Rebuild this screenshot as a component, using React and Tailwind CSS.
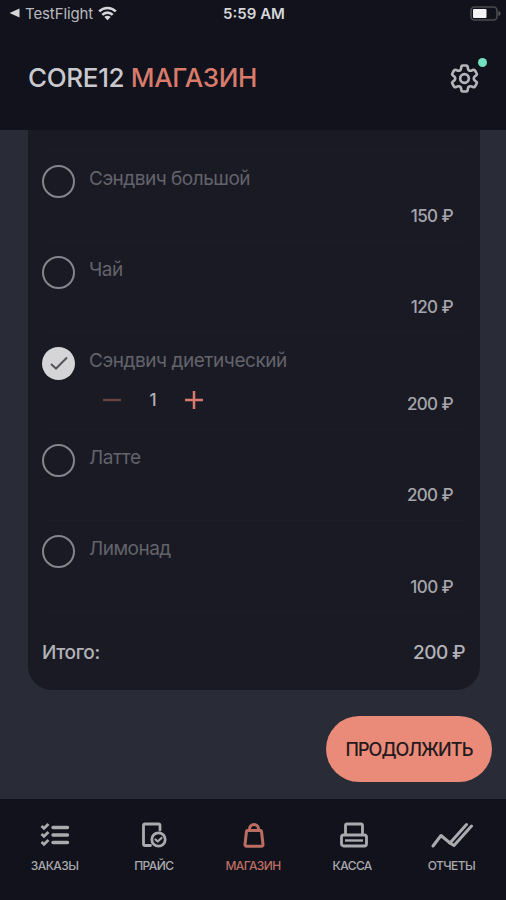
import React, { useState } from "react";

const initialItems = [
  { id: 1, name: "Сэндвич большой", price: 150, count: 0, tracking: "tracking-[-0.5px]" },
  { id: 2, name: "Чай", price: 120, count: 0, tracking: "tracking-[-0.5px]" },
  { id: 3, name: "Сэндвич диетический", price: 200, count: 1, tracking: "tracking-[-0.45px]" },
  { id: 4, name: "Латте", price: 200, count: 0, tracking: "tracking-[-0.4px]" },
  { id: 5, name: "Лимонад", price: 100, count: 0, tracking: "tracking-[-0.5px]" },
];

function StatusBar() {
  return (
    <div className="grid grid-cols-3 items-center h-7 pl-[9px] pr-[5px] text-[#d6d6da]">
      <div className="flex items-center pb-[2px]">
        <svg width="11" height="10" viewBox="0 0 11 10" fill="currentColor">
          <path d="M0.5 5 10.5 0.5v9z" />
        </svg>
        <span className="ml-[5px] text-[15px] leading-none tracking-[-0.1px] text-[#b9b9be]">TestFlight</span>
        <svg className="ml-[5px]" width="19" height="15" viewBox="0 0 19 15" fill="none" stroke="currentColor" strokeWidth="2.6">
          <path d="M1.2 5.4a11.8 11.8 0 0 1 16.6 0" />
          <path d="M4.3 8.8a7.4 7.4 0 0 1 10.4 0" />
          <path d="M9.5 14.3 6.3 11a4.6 4.6 0 0 1 6.4 0z" fill="currentColor" stroke="none" />
        </svg>
      </div>
      <div className="pb-[2px] pr-[2px] text-center text-[15px] leading-none font-semibold tracking-[0px]">5:59 AM</div>
      <svg className="justify-self-end mb-[2px]" width="31" height="15" viewBox="0 0 31 15">
        <rect x="1" y="1" width="26" height="13" rx="3.5" fill="none" stroke="#4b4b52" strokeWidth="1.6" />
        <rect x="3" y="3" width="13.5" height="9" rx="1" fill="#f4f4f5" />
        <path d="M28.5 5v5c1.3-.5 2-1.3 2-2.5s-.7-2-2-2.5z" fill="#5a5a61" />
      </svg>
    </div>
  );
}

function GearIcon() {
  return (
    <svg width="37" height="37" viewBox="0 0 24 24" fill="none" stroke="currentColor" strokeWidth="1.7" strokeLinejoin="round">
      <path d="M10.8 3h2.4a.8.8 0 0 1 .8.7l.3 1.5a1.500 1.500 0 0 0 2 1.100l1.500-.5a.8.8 0 0 1 1 .4l1.100 1.900a.8.8 0 0 1-.2 1.100l-1.200 1.100a1.500 1.500 0 0 0 0 2.200l1.200 1.100a.8.8 0 0 1 .2 1.100l-1.100 1.900a.8.8 0 0 1-1 .4l-1.500-.5a1.500 1.500 0 0 0-2 1.100l-.3 1.500a.8.8 0 0 1-.8.7h-2.400a.8.8 0 0 1-.8-.7l-.3-1.500a1.500 1.500 0 0 0-2-1.100l-1.500.5a.8.8 0 0 1-1-.4l-1.100-1.900a.8.8 0 0 1 .2-1.100l1.200-1.100a1.500 1.500 0 0 0 0-2.200L4.300 9.200a.8.8 0 0 1-.2-1.100l1.100-1.900a.8.8 0 0 1 1-.4l1.500.5a1.500 1.500 0 0 0 2-1.100l.3-1.500a.8.8 0 0 1 .8-.7z" transform="translate(0 .6)" />
      <circle cx="12" cy="12" r="2.8" />
    </svg>
  );
}

function Header() {
  return (
    <header className="h-[130px] shrink-0 bg-[#11121b]">
      <StatusBar />
      <div className="flex items-center justify-between h-[100px] pl-7 pr-[23px]">
        <h1 className="text-[26px] leading-none font-medium tracking-[-0.35px] text-[#c9c9cd] whitespace-nowrap">
          CORE12 <span className="text-[#d97b6b]">МАГАЗИН</span>
        </h1>
        <button className="relative text-[#b5b5ba]">
          <GearIcon />
          <span className="absolute -top-[2px] -right-[4px] w-[9px] h-[9px] rounded-full bg-[#72dfbf]"></span>
        </button>
      </div>
    </header>
  );
}

function ItemRow({ item, onToggle, onChange }) {
  const selected = item.count > 0;

  return (
    <li className={`flex pr-[12px] ${selected ? "h-[97px]" : "h-[91px]"}`}>
      <button onClick={() => onToggle(item.id)} className="mt-[14px] -ml-[5px] w-[33px] h-[33px] shrink-0">
        {selected ? (
          <svg width="33" height="33" viewBox="0 0 33 33">
            <circle cx="16.5" cy="16.5" r="16.5" fill="#d5d5d8" />
            <path d="M9 17l5 4.5 11-11" fill="none" stroke="#55555c" strokeWidth="2" />
          </svg>
        ) : (
          <div className="w-[33px] h-[33px] rounded-full border-2 border-[#85858e]"></div>
        )}
      </button>
      <div className="flex flex-col grow ml-[14px]">
        <span className={`mt-[18px] text-[19px] leading-5 text-[#63636b] whitespace-nowrap ${item.tracking}`}>{item.name}</span>
        {selected && (
          <div className="flex items-center mt-5 ml-[14px] h-[18px]">
            <button onClick={() => onChange(item.id, -1)}>
              <svg width="18" height="18" viewBox="0 0 18 18" stroke="#67433f" strokeWidth="2.5">
                <path d="M0 9h18" />
              </svg>
            </button>
            <span className="w-[64px] text-center text-[17px] leading-none font-medium text-[#b2b2b7]">{item.count}</span>
            <button onClick={() => onChange(item.id, 1)}>
              <svg width="18" height="18" viewBox="0 0 18 18" stroke="#d97b6b" strokeWidth="2.5">
                <path d="M0 9h18M9 0v18" />
              </svg>
            </button>
          </div>
        )}
      </div>
      <span className="self-end mb-[15px] text-[17px] leading-5 font-medium tracking-[-0.6px] text-[#a5a5ab] whitespace-nowrap">
        {item.price} ₽
      </span>
    </li>
  );
}

const tabs = [
  {
    label: "ЗАКАЗЫ",
    icon: (
      <svg width="30" height="26" viewBox="0 0 30 26" fill="none" stroke="currentColor">
        <path strokeWidth="2.8" d="M1.5 4l2.5 2.3L8.5 2M1.5 12l2.5 2.3L8.5 10M1.5 20l2.5 2.3L8.5 18" />
        <path strokeWidth="3.4" strokeLinecap="round" d="M13 5.5h14.5M13 13h14.5M13 20.5h14.5" />
      </svg>
    ),
  },
  {
    label: "ПРАЙС",
    icon: (
      <svg width="26" height="26" viewBox="0 0 26 26" fill="none" stroke="currentColor" strokeWidth="2.8" strokeLinecap="round" strokeLinejoin="round">
        <path d="M9.5 23.5H4a1.5 1.5 0 0 1-1.5-1.5V3.5A1.5 1.5 0 0 1 4 2h13.5A1.5 1.5 0 0 1 19 3.5V8" />
        <circle cx="17.5" cy="17.5" r="6.7" />
        <path strokeWidth="2.3" d="M14.5 17.5l2.2 2 3.8-3.5" />
      </svg>
    ),
  },
  {
    label: "МАГАЗИН",
    icon: (
      <svg className="translate-x-[1px]" width="24" height="26" viewBox="0 0 24 26" fill="none" stroke="currentColor" strokeWidth="3" strokeLinejoin="round">
        <path d="M5.5 8.5h13a1 1 0 0 1 1 .9l1.5 13.1a1.5 1.5 0 0 1-1.5 1.7h-15A1.5 1.5 0 0 1 3 22.5L4.5 9.4a1 1 0 0 1 1-.9z" />
        <path d="M7.5 8V7a4.5 4.5 0 0 1 9 0v1" />
      </svg>
    ),
  },
  {
    label: "КАССА",
    icon: (
      <svg className="translate-x-[2px]" width="28" height="26" viewBox="0 0 28 26" fill="none" stroke="currentColor" strokeWidth="2.8" strokeLinejoin="round">
        <path d="M5.5 12.5V3.5A1.5 1.5 0 0 1 7 2h14a1.5 1.5 0 0 1 1.5 1.5v9" />
        <rect x="1.5" y="13" width="25" height="11" rx="2.2" />
        <path strokeWidth="2.4" d="M5 18.5h18" />
      </svg>
    ),
  },
  {
    label: "ОТЧЕТЫ",
    icon: (
      <svg className="translate-x-[1px]" width="42" height="26" viewBox="0 0 42 26" fill="none" stroke="currentColor" strokeWidth="3" strokeLinecap="round" strokeLinejoin="round">
        <path d="M2 24l8-10.5 9 7.5L35.5 2.5" />
        <path d="M19 21l4 2.5L40.500 4" />
      </svg>
    ),
  },
];

function TabBar({ active, onSelect }) {
  return (
    <nav className="grid grid-cols-5 h-[101px] shrink-0 px-[5px] pt-[23px] bg-[#11121b]">
      {tabs.map(tab => (
        <button
          key={tab.label}
          onClick={() => onSelect(tab.label)}
          className={`flex flex-col items-center ${tab.label === active ? "text-[#bc6e63]" : "text-[#aaaaaf]"}`}
        >
          {tab.icon}
          <span className="mt-[12px] text-[12px] leading-3 font-medium tracking-[-0.6px]">{tab.label}</span>
        </button>
      ))}
    </nav>
  );
}

export default function App() {
  const [items, setItems] = useState(initialItems);
  const [active, setActive] = useState("МАГАЗИН");

  const total = items.reduce((sum, item) => sum + item.price * item.count, 0);

  const handleToggle = (id) => {
    setItems(items.map(item => item.id === id ? { ...item, count: item.count > 0 ? 0 : 1 } : item));
  };

  // The last piece is removed with the round checkbox, not with the minus
  const handleChange = (id, step) => {
    setItems(items.map(item => item.id === id ? { ...item, count: Math.max(1, item.count + step) } : item));
  };

  return (
    <div className="flex flex-col w-full h-screen overflow-hidden bg-[#292b37] font-['Inter','Liberation_Sans',sans-serif]">
      <Header />
      <main className="flex flex-col grow min-h-0">
        <section className="ml-7 mr-[26px] pt-5 rounded-b-[24px] bg-[#1a1a25]">
          <ul className="ml-[19px] mr-[15px] border-y border-[#1d1d28] divide-y divide-[#1d1d28]">
            {items.map(item => (
              <ItemRow key={item.id} item={item} onToggle={handleToggle} onChange={handleChange} />
            ))}
          </ul>
          <div className="flex items-center justify-between h-[77px] pl-[14px] pr-[15px] pt-[3px] text-[19px] font-medium text-[#b2b2b7]">
            <span className="tracking-[-0.4px]">Итого:</span>
            <span className="tracking-[-0.6px]">{total} ₽</span>
          </div>
        </section>
        <button className="self-end mt-[26px] mr-[14px] w-[166px] h-[66px] rounded-full bg-[#e98b78] text-[18px] font-medium tracking-[-0.9px] text-[#24191d]">
          ПРОДОЛЖИТЬ
        </button>
      </main>
      <TabBar active={active} onSelect={setActive} />
    </div>
  );
}
